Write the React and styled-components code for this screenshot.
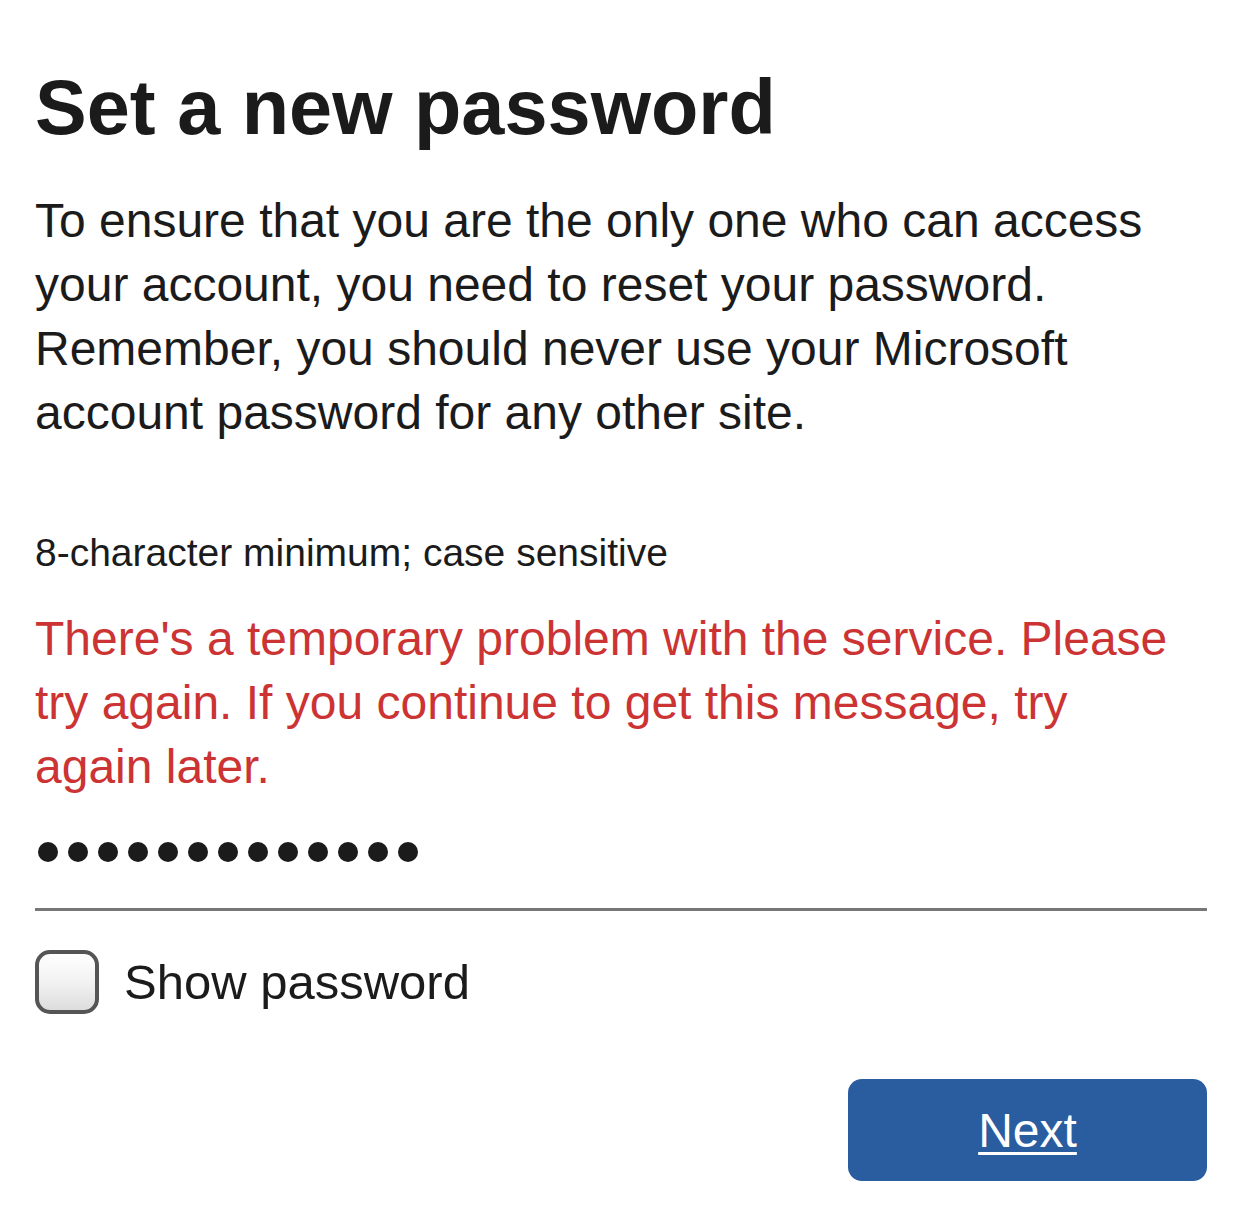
import React from 'react';
import styled, { createGlobalStyle } from 'styled-components';

const GlobalStyle = createGlobalStyle`
  html, body {
    margin: 0;
    padding: 0;
    background: #ffffff;
  }
  body {
    font-family: "Liberation Sans", Arial, Helvetica, sans-serif;
    color: #1b1b1b;
  }
`;

const Page = styled.main`
  width: 1242px;
  box-sizing: border-box;
  padding: 68px 35px 40px;
  display: flex;
  flex-direction: column;
`;

const Heading = styled.h1`
  margin: 0;
  font-size: 77.5px;
  line-height: 78px;
  font-weight: 700;
  color: #1b1b1b;
`;

const Intro = styled.p`
  margin: 43px 0 0;
  font-size: 48px;
  line-height: 64px;
  color: #1b1b1b;
`;

const Hint = styled.div`
  margin-top: 84px;
  font-size: 39px;
  line-height: 48px;
  color: #1b1b1b;
`;

const ErrorText = styled.div`
  margin-top: 30px;
  max-width: 1145px;
  font-size: 48px;
  line-height: 64px;
  color: #cc3333;
`;

const Field = styled.div`
  margin-top: 43px;
  padding-bottom: 46px;
  border-bottom: 3px solid #777777;
  display: flex;
  gap: 10px;
  padding-left: 3px;
`;

const Dot = styled.span`
  width: 20px;
  height: 20px;
  border-radius: 50%;
  background: #1b1b1b;
`;

const CheckRow = styled.label`
  margin-top: 39px;
  display: flex;
  align-items: center;
  gap: 25px;
  font-size: 49px;
  line-height: 64px;
  color: #1b1b1b;
`;

const Box = styled.span`
  width: 64px;
  height: 64px;
  box-sizing: border-box;
  border: 4px solid #555555;
  border-radius: 15px;
  background: linear-gradient(to bottom, #ffffff 0%, #f2f2f2 50%, #dddddd 100%);
  flex-shrink: 0;
`;

const Actions = styled.div`
  margin-top: 65px;
  display: flex;
  justify-content: flex-end;
`;

const NextButton = styled.button`
  width: 359px;
  height: 102px;
  border: none;
  border-radius: 14px;
  background: #2a5ca0;
  color: #ffffff;
  font-family: "Liberation Sans", Arial, Helvetica, sans-serif;
  font-size: 48px;
  text-decoration: underline;
  text-underline-offset: 5px;
  text-decoration-thickness: 3px;
  cursor: pointer;
`;

export default function App() {
  const dots = Array.from({ length: 13 });
  return (
    <>
      <GlobalStyle />
      <Page>
        <Heading>Set a new password</Heading>
        <Intro>
          To ensure that you are the only one who can access your account, you need to reset your
          password. Remember, you should never use your Microsoft account password for any other site.
        </Intro>
        <Hint>8-character minimum; case sensitive</Hint>
        <ErrorText>
          There's a temporary problem with the service. Please try again. If you continue to get this
          message, try again later.
        </ErrorText>
        <Field>
          {dots.map((_, i) => (
            <Dot key={i} />
          ))}
        </Field>
        <CheckRow>
          <Box />
          Show password
        </CheckRow>
        <Actions>
          <NextButton>Next</NextButton>
        </Actions>
      </Page>
    </>
  );
}
